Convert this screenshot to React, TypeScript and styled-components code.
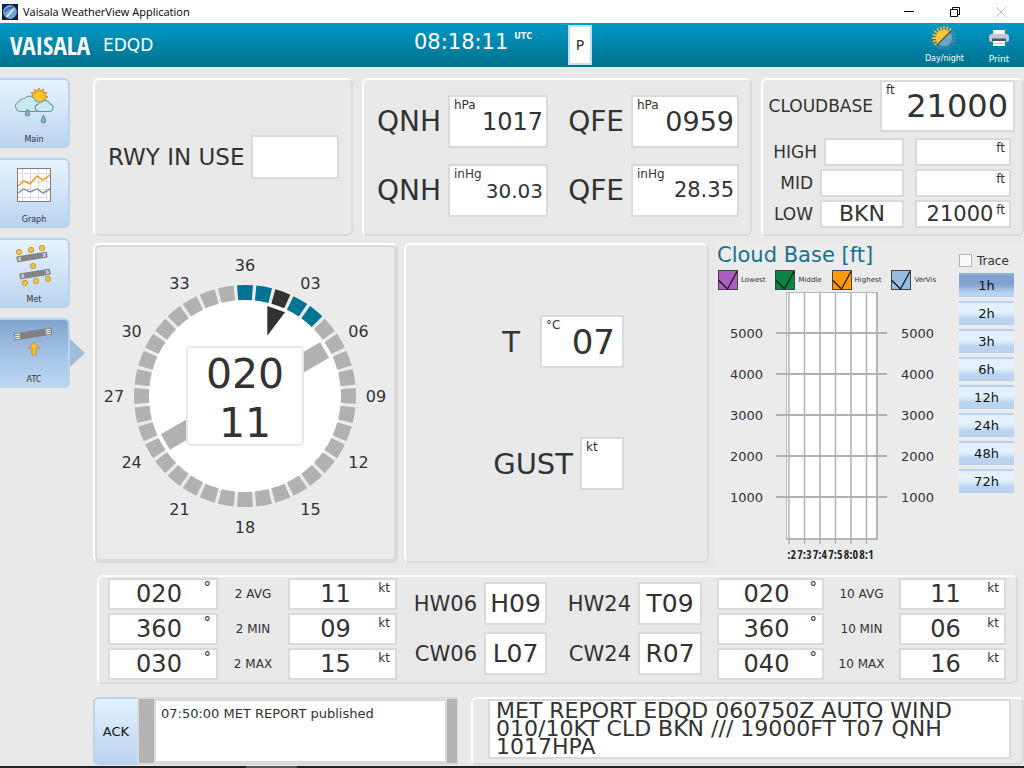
import React, { useState } from "react";
import styled, { createGlobalStyle, css } from "styled-components";

const Global = createGlobalStyle`
  *, *::before, *::after { box-sizing: border-box; }
  body {
    margin: 0;
    color: #323232;
    font-family: Verdana, "DejaVu Sans", sans-serif;
    background: #e9e9e9;
  }
  button, input { font: inherit; color: inherit; margin: 0; padding: 0; }
`;

const Page = styled.div`
  min-height: 100vh;
  display: flex;
  flex-direction: column;
  background: repeating-linear-gradient(#e9e9e9 0 3px, #e8e8e8 3px 5px, #e9e9e9 5px 8px);
`;

/* ---------- window title bar ---------- */

const TitleBar = styled.div`
  height: 23px;
  padding-left: 2px;
  display: flex;
  align-items: center;
  gap: 5px;
  background: #fff;
  color: #000;
`;
const TitleText = styled.span`
  flex: 1;
  font-family: "Open Sans", sans-serif;
  font-size: 11px;
`;
const WindowButtons = styled.div`
  display: flex;
`;
const WindowButton = styled.button<{ $off?: boolean }>`
  width: 46px;
  height: 22px;
  border: 0;
  background: none;
  color: ${(p) => (p.$off ? "#c4c4c4" : "#000")};
  display: flex;
  align-items: center;
  justify-content: center;
`;

/* ---------- application header ---------- */

const Header = styled.header`
  height: 44px;
  display: grid;
  grid-template-columns: 414fr 154fr 456fr;
  background: linear-gradient(#0099c6, #00708c);
  color: #fff;
`;
const Brand = styled.div`
  display: flex;
  align-items: center;
  gap: 14px;
  padding-left: 10px;
`;
const Logo = styled.span`
  width: 79px;
  font: bold 25px/44px "Liberation Sans Narrow", "Open Sans Condensed", "DejaVu Sans Condensed", sans-serif;
`;
const Station = styled.span`
  font-size: 17px;
`;
const Clock = styled.time`
  display: flex;
  align-items: flex-start;
  gap: 6px;
  padding-top: 6px;
  font-size: 21px;
  line-height: 26px;
`;
const Zone = styled.span`
  font-size: 8px;
  font-weight: bold;
  line-height: 16px;
`;
const HeaderRight = styled.div`
  display: flex;
  align-items: center;
  justify-content: space-between;
  padding-right: 8px;
`;
const PageFlag = styled.button`
  width: 24px;
  height: 40px;
  border: 2px solid #c3dfe9;
  background: #fff;
  color: #323232;
  font-size: 14px;
`;
const HeaderTools = styled.div`
  display: flex;
  gap: 18px;
`;
const ToolButton = styled.button<{ $size: number }>`
  min-width: 34px;
  height: 44px;
  border: 0;
  background: none;
  color: #fff;
  display: flex;
  flex-direction: column;
  align-items: center;
  justify-content: space-between;
  padding: 2px 0;
  font-size: ${(p) => p.$size}px;
  line-height: 12px;
`;

/* ---------- body ---------- */

const Body = styled.div`
  flex: 1;
  display: flex;
  padding-top: 11px;
`;
const SideNav = styled.nav`
  flex: 0 0 93px;
  display: flex;
  flex-direction: column;
  gap: 10px;
`;
const NavButton = styled.button<{ $active?: boolean }>`
  position: relative;
  width: 70px;
  height: 70px;
  border: 2px solid #b9d4ef;
  border-left: 0;
  border-radius: 0 6px 6px 0;
  background: ${(p) =>
    p.$active
      ? "linear-gradient(#7fa5cf, #a9c6e8 60%, #bdd6f2)"
      : "linear-gradient(#e6f3ff, #bbd4ef)"};
  display: flex;
  flex-direction: column;
  align-items: center;
  justify-content: space-between;
  padding: 3px 0 0;
  font-size: 8px;
  line-height: 12px;
  ${(p) =>
    p.$active &&
    css`
      &::after {
        content: "";
        position: absolute;
        left: 70px;
        top: 19px;
        border-left: 15px solid #9fbcd8;
        border-top: 14px solid transparent;
        border-bottom: 14px solid transparent;
      }
    `}
`;
const Main = styled.main`
  flex: 1;
  min-width: 0;
`;

const Panel = styled.section`
  min-width: 0;
  border: 2px solid;
  border-color: #fff #dadada #dadada #fff;
  border-radius: 6px;
`;
const TopRow = styled.div`
  display: grid;
  grid-template-columns: 260fr 390fr 263fr;
  gap: 9px;
  min-height: 158px;
`;
const MiddleRow = styled.div`
  display: grid;
  grid-template-columns: 305fr 305fr 309fr;
  gap: 6px;
  margin-top: 7px;
  min-height: 320px;
`;

/* ---------- value fields ---------- */

const FieldBox = styled.output<{ $w?: number; $h: number; $size: number; $align?: string; $pad?: number }>`
  position: relative;
  display: flex;
  align-items: center;
  justify-content: ${(p) => p.$align || "center"};
  width: ${(p) => (p.$w ? `${p.$w}px` : "100%")};
  height: ${(p) => p.$h}px;
  padding-right: ${(p) => p.$pad || 0}px;
  border: 2px solid #dadada;
  background: #fff;
  font-size: ${(p) => p.$size}px;
  line-height: 1;
`;
const Unit = styled.span<{ $right?: number; $size: number }>`
  position: absolute;
  top: 0;
  ${(p) => (p.$right ? `right: ${p.$right}px;` : "left: 4px;")}
  font-size: ${(p) => p.$size}px;
  line-height: 16px;
`;

type FieldProps = {
  label?: string;
  value?: string;
  unit?: string;
  w?: number;
  h: number;
  size?: number;
  align?: string;
  pad?: number;
  unitRight?: number;
  unitSize?: number;
};
const Field = ({ label, value, unit, w, h, size = 24, align, pad, unitRight, unitSize = 12 }: FieldProps) => (
  <FieldBox aria-label={label} $w={w} $h={h} $size={size} $align={align} $pad={pad}>
    {unit && <Unit $right={unitRight} $size={unitSize}>{unit}</Unit>}
    {value}
  </FieldBox>
);

const Label = styled.span<{ $size: number; $gap?: number; $w?: number }>`
  padding-right: ${(p) => p.$gap ?? 7}px;
  font-size: ${(p) => p.$size}px;
  text-align: right;
  white-space: nowrap;
  ${(p) => p.$w && `flex: 0 0 ${p.$w}px;`}
`;

const RunwayPanel = styled(Panel)`
  display: flex;
  align-items: center;
  padding-left: 13px;
`;
const PressurePanel = styled(Panel)`
  display: grid;
  grid-template-columns: 84fr 100fr 83fr 108fr;
  grid-auto-rows: 53px;
  gap: 16px 0;
  align-items: center;
  padding: 15px 11px 0 0;
`;
const CloudPanel = styled(Panel)`
  padding-right: 7px;
`;
const CloudTop = styled.div`
  display: grid;
  grid-template-columns: 117fr 135fr;
  align-items: center;
`;
const CloudLayer = styled.div`
  display: grid;
  grid-template-columns: 141fr 96fr;
  gap: 11px;
  padding-right: 4px;
  margin-top: 3px;
  &:nth-child(2) { margin-top: 6px; }
`;
const LayerAmount = styled.div`
  display: flex;
  align-items: center;
`;

/* ---------- wind rose ---------- */

const RoseFrame = styled.div`
  height: 100%;
  border: 2px solid #dadada;
  border-radius: 5px;
  background: #ebebeb;
`;
const RoseSvg = styled.svg`
  display: block;
  width: 100%;
  height: 312px;
`;

const polar = (deg: number, r: number) => {
  const a = (deg * Math.PI) / 180;
  return `${(Math.sin(a) * r).toFixed(2)} ${(-Math.cos(a) * r).toFixed(2)}`;
};
const segment = (i: number) => {
  const c = i * 10;
  const o = 4.1;
  return `M${polar(c - o, 111)}A111 111 0 0 1 ${polar(c + o, 111)}L${polar(c + o, 96)}A96 96 0 0 0 ${polar(c - o, 96)}Z`;
};
const segmentColor = (i: number) => (i === 2 ? "#323232" : i < 5 ? "#007493" : "#b1b1b1");

const WindRose = () => (
  <RoseSvg viewBox="-148 -149 297 312" role="img" aria-label="Wind 020 degrees, 11 knots">
    <circle r="97" fill="#fff" />
    {Array.from({ length: 36 }, (_, i) => (
      <path key={i} d={segment(i)} fill={segmentColor(i)} />
    ))}
    <rect x="-9" y="-92" width="18" height="184" fill="#b1b1b1" transform="rotate(60)" />
    <path d="M22.3-90 40-83.7 22.3-60.3Z" fill="#323232" />
    <rect x="-58" y="-49" width="116" height="98" rx="4" fill="#fff" stroke="#e6e6e6" strokeWidth="2" />
    <g fill="#323232" textAnchor="middle" fontSize="41">
      <text y="-8">020</text>
      <text y="41">11</text>
    </g>
    <g fill="#323232" textAnchor="middle" fontSize="16">
      {Array.from({ length: 12 }, (_, i) => {
        const [x, y] = polar(i * 30, 131).split(" ").map(Number);
        return (
          <text key={i} x={x} y={y + 6}>
            {String(i === 0 ? 36 : i * 3).padStart(2, "0")}
          </text>
        );
      })}
    </g>
  </RoseSvg>
);

/* ---------- temperature and gust ---------- */

const ReadingsPanel = styled(Panel)`
  display: flex;
  flex-direction: column;
  align-items: flex-end;
  gap: 69px;
  padding: 70px 83px 0 0;
`;
const Reading = styled.div`
  display: flex;
  align-items: center;
`;

/* ---------- cloud base chart ---------- */

const ChartPanel = styled.section`
  display: flex;
  gap: 9px;
  padding-right: 10px;
  background: #ebebeb;
`;
const ChartColumn = styled.div`
  flex: 1;
  min-width: 0;
  padding-left: 2px;
`;
const ChartTitle = styled.h2`
  margin: 0;
  color: #16718f;
  font-size: 21px;
  font-weight: normal;
  line-height: 25px;
  white-space: nowrap;
`;
const Legend = styled.div`
  display: flex;
  gap: 10px;
  padding: 2px 0 0 1px;
`;
const LegendItem = styled.label`
  display: grid;
  grid-template-columns: 20px auto;
  column-gap: 3px;
  align-items: center;
  font-size: 7px;
`;
const Swatch = styled.input<{ $color: string }>`
  appearance: none;
  grid-area: 1 / 1;
  width: 20px;
  height: 20px;
  border: 1px solid #444;
  background: ${(p) => p.$color};
`;
const SwatchMark = styled.svg`
  grid-area: 1 / 1;
  pointer-events: none;
  z-index: 1;
  input:not(:checked) + & { visibility: hidden; }
`;
const ChartSvg = styled.svg`
  display: block;
  width: 100%;
  height: 273px;
`;
const SideColumn = styled.div`
  flex: 0 0 55px;
  display: flex;
  flex-direction: column;
  gap: 4px;
`;
const TraceLabel = styled.label`
  display: flex;
  align-items: center;
  gap: 5px;
  height: 17px;
  margin: 9px 0 0;
  font-size: 12px;
  line-height: 16px;
`;
const TraceBox = styled.input`
  appearance: none;
  flex: 0 0 13px;
  height: 13px;
  border: 1px solid #b4b4b4;
  background: #fafafa;
  &:checked { background: #7fa5cf; }
`;
const HourButton = styled.button<{ $active: boolean }>`
  height: 24px;
  border: 0;
  border-top: 2px solid ${(p) => (p.$active ? "#8fb2d8" : "#b7d1ec")};
  border-bottom: 1px solid #b7d1ec;
  background: ${(p) =>
    p.$active
      ? "linear-gradient(#7fa3cd 45%, #bad3ef 85%)"
      : "linear-gradient(#e3f1fe 45%, #bad4f0 75%)"};
  color: #111;
  font-size: 13px;
  line-height: 20px;
`;

const legend = [
  { name: "Lowest", color: "#ad5fc0" },
  { name: "Middle", color: "#088443" },
  { name: "Highest", color: "#ff9900" },
  { name: "VerVis", color: "#95bde2" },
];
const ticks = [":2", "7:3", "7:4", "7:5", "8:0", "8:1"];
const hours = ["1h", "2h", "3h", "6h", "12h", "24h", "48h", "72h"];

const CloudChart = () => (
  <ChartSvg viewBox="0 0 232 273" preserveAspectRatio="xMinYMin meet" role="img" aria-label="Cloud base in feet">
    <rect x="69.5" y="2.5" width="91" height="246" fill="#fff" stroke="#b9b9b9" strokeWidth="1" />
    <path d="M160 2v247H69" fill="none" stroke="#b4b4b4" strokeWidth="2" />
    {[5000, 4000, 3000, 2000, 1000].map((ft, i) => {
      const y = 43 + i * 41;
      return (
        <g key={ft} fontSize="13" fill="#323232">
          <path d={`M59 ${y}H170`} stroke="#b1b1b1" strokeWidth="2" />
          <text x="46" y={y + 5} textAnchor="end">{ft}</text>
          <text x="184" y={y + 5}>{ft}</text>
        </g>
      );
    })}
    {ticks.map((t, i) => {
      const x = 72 + i * 15.5;
      return (
        <g key={t}>
          <path d={`M${x} 2V254`} stroke="#b1b1b1" strokeWidth="1.5" />
          <text
            x={x + 7}
            y="269"
            fontSize="12"
            fontFamily='"Liberation Sans Narrow", "Open Sans Condensed", "Liberation Sans", sans-serif'
            fill="#222"
            textAnchor="end"
          >
            {t}
          </text>
        </g>
      );
    })}
  </ChartSvg>
);

/* ---------- wind statistics ---------- */

const StatsPanel = styled(Panel)`
  display: grid;
  grid-template-columns: 289fr 320fr 289fr;
  min-height: 109px;
  margin: 12px 6px 0 4px;
  padding: 1px 10px 0 9px;
`;
const StatsTable = styled.table<{ $columns: string }>`
  display: block;
  tbody { display: grid; gap: 3px; }
  tr {
    display: grid;
    grid-template-columns: ${(p) => p.$columns};
    align-items: center;
    height: 32px;
  }
  td, th { padding: 0; font-size: 12px; font-weight: normal; text-align: center; }
`;
const ComponentGrid = styled.div`
  display: grid;
  grid-template-columns: 87fr 63fr 91fr 64fr;
  grid-auto-rows: 43px;
  gap: 7px 0;
  align-items: center;
  padding: 4px 15px 0 0;
`;

const WindStats = ({ minutes, columns, rows }: { minutes: number; columns: string; rows: string[][] }) => (
  <StatsTable $columns={columns}>
    <tbody>
      {rows.map(([kind, dir, speed]) => (
        <tr key={kind}>
          <td><Field value={dir} unit="°" h={32} size={24} pad={8} unitRight={5} unitSize={15} /></td>
          <th scope="row">{minutes} {kind}</th>
          <td><Field value={speed} unit="kt" h={32} size={24} pad={14} unitRight={5} /></td>
        </tr>
      ))}
    </tbody>
  </StatsTable>
);

/* ---------- messages ---------- */

const BottomRow = styled.div`
  display: grid;
  grid-template-columns: 365fr 553fr;
  gap: 13px;
  margin-top: 13px;
  height: 68px;
`;
const LogFrame = styled.section`
  display: flex;
  gap: 2px;
  padding-right: 1px;
  background: #dadada;
  border-radius: 6px 0 0 6px;
`;
const AckButton = styled.button`
  width: 44px;
  border: 2px solid #b9d4ef;
  border-right: 0;
  border-radius: 6px 0 0 6px;
  background: linear-gradient(#e4f2ff, #bad3ef);
  color: #111;
  font-size: 13px;
`;
const Bar = styled.div<{ $w: number }>`
  flex: 0 0 ${(p) => p.$w}px;
  margin: 2px 0;
  background: #b3b3b3;
`;
const Log = styled.div`
  flex: 1;
  margin: 4px 0;
  padding: 4px 5px;
  background: #fff;
  font-size: 13px;
  line-height: 18px;
`;
const ReportPanel = styled(Panel)`
  padding: 0 11px 0 15px;
`;
const Report = styled.p`
  margin: 0;
  height: 60px;
  padding: 1px 6px;
  overflow: hidden;
  border: 2px solid #dadada;
  background: #fff;
  font-size: 22px;
  line-height: 18px;
`;
const Taskbar = styled.div`
  height: 2px;
  margin-top: 1px;
  background: linear-gradient(90deg, #222 24%, #555 24% 29%, #222 29%);
`;

/* ---------- icons ---------- */

const AppIcon = () => (
  <svg width="16" height="16" viewBox="0 0 16 16" aria-hidden="true">
    <rect width="16" height="16" fill="#0b2350" />
    <circle cx="8" cy="8" r="6.5" fill="#6fa3dc" stroke="#a9c8ea" strokeWidth=".6" />
    <path d="M2.500 8q4-5 9-4.500" stroke="#3566ad" strokeWidth="2" fill="none" />
    <path d="M4 12.500 10 5.500 13 3 11.500 6.500 5.500 13Z" fill="#f0e9c4" />
  </svg>
);

const cloud =
  "M5.500 16.500a5 5 0 0 1-.8-9.800 4.500 4.500 0 0 1 5-3 6.500 6.500 0 0 1 11.500 2.300 5.300 5.300 0 0 1-.2 10.500Z";

const sunBurst = Array.from({ length: 24 }, (_, i) => polar(i * 15, i % 2 ? 6.2 : 9)).join("L");

const MainIcon = () => (
  <svg width="40" height="43" viewBox="0 -5 40 43" aria-hidden="true">
    <path d={`M${sunBurst}Z`} fill="#f9b022" stroke="#b98524" strokeWidth=".8" transform="translate(25 9)" />
    <circle cx="25" cy="9" r="5.200" fill="#ffc62e" />
    <g fill="#c9e9f1" stroke="#6492a2">
      <path d={cloud} transform="translate(.500 7)" />
      <path d={cloud} transform="translate(20.500 11.500) scale(.72)" strokeWidth="1.400" />
    </g>
    <g fill="#86b4c4" stroke="#50798a" strokeWidth=".8">
      <path d="M13.500 21q4.500 7 0 7t0-7Z" />
      <path d="M29.500 27q4.500 8 0 8t0-8Z" />
    </g>
  </svg>
);

const GraphIcon = () => (
  <svg width="34" height="39" viewBox="0 -5 34 39" aria-hidden="true">
    <rect x=".5" y=".5" width="33" height="33" fill="#fff" stroke="#7d7d86" />
    <path d="M5.500 1v32M13.500 1v32M21.500 1v32M29.500 1v32M1 5.500h32M1 13.500h32M1 21.500h32M1 29.500h32" stroke="#e2dce0" />
    <path d="M1 18l6-5 6 3 7-8 6 4 7-5" fill="none" stroke="#f79a10" strokeWidth="1.500" />
    <path d="M1 25l6-4 6 3 7-3 6 4 7-4" fill="none" stroke="#7f94ab" strokeWidth="1.500" />
  </svg>
);

const Dot = ({ x, y }: { x: number; y: number }) => (
  <circle cx={x} cy={y} r="2.700" fill="#f5c63c" stroke="#b58e3d" strokeWidth=".8" />
);

const MetIcon = () => (
  <svg width="38" height="44" viewBox="0 0 38 44" aria-hidden="true">
    {[[4, 9], [16, 7], [27, 5], [18, 23], [10, 40], [21, 38], [33, 36]].map(([x, y]) => (
      <Dot key={`${x}-${y}`} x={x} y={y} />
    ))}
    {["translate(17 14) rotate(-9)", "translate(20 31) rotate(-9)"].map((t) => (
      <g key={t} transform={t}>
        <rect x="-15" y="-2.500" width="30" height="5" fill="#858585" stroke="#6d6d6d" strokeWidth=".7" />
        <path d="M-14-1h3M-14 1h3M11-1h3M11 1h3" stroke="#fff" />
      </g>
    ))}
  </svg>
);

const AtcIcon = () => (
  <svg width="42" height="34" viewBox="0 0 42 34" aria-hidden="true">
    <g transform="translate(20 11) rotate(-9)">
      <rect x="-19" y="-3.500" width="38" height="7" fill="#808080" />
      <path d="M-18-2h5M-18 0h5M-18 2h5M13-2h5M13 0h5M13 2h5" stroke="#fff" />
    </g>
    <path d="M21 19l5.500 6h-3.500v7h-4v-7h-3.500Z" fill="#f5c22e" stroke="#b08a34" strokeWidth=".8" />
  </svg>
);

const rays = (from: number, to: number) =>
  Array.from({ length: 20 }, (_, i) => i * 18)
    .filter((d) => (from < to ? d >= from && d < to : d >= from || d < to))
    .map((d) => `M${polar(d, 7)}L${polar(d, 12)}`)
    .join("");

const DayNightIcon = () => (
  <svg width="26" height="26" viewBox="-13 -13 26 26" aria-hidden="true">
    <path d={rays(225, 45)} stroke="#f0b23a" strokeWidth="1.800" />
    <path d={rays(45, 225)} stroke="#4a86a6" strokeWidth="1.800" />
    <path d="M-5.700 5.700A8 8 0 0 1 5.700-5.700Z" fill="#ffc633" />
    <path d="M-5.700 5.700A8 8 0 0 0 5.700-5.700Z" fill="#68a9c8" />
    <path d="M-7 7 7-7" stroke="#51583f" strokeWidth="1.200" />
  </svg>
);

const PrintIcon = () => (
  <svg width="20" height="22" viewBox="0 -4 20 22" aria-hidden="true">
    <path d="M4 1h12v5H4Z" fill="#f4f6f7" />
    <rect y="5" width="20" height="8" rx="2.500" fill="#c3c7d2" />
    <path d="M3 9.500h14v3H3Z" fill="#4f5563" />
    <path d="M4 12h12v5H4Z" fill="#fff" />
    <path d="M5 14.500h10" stroke="#b9c0c6" />
  </svg>
);

const navItems = [
  { name: "Main", icon: <MainIcon /> },
  { name: "Graph", icon: <GraphIcon /> },
  { name: "Met", icon: <MetIcon /> },
  { name: "ATC", icon: <AtcIcon /> },
];

const layers = [
  { name: "HIGH", w: 61, amount: "", height: "" },
  { name: "MID", w: 57, amount: "", height: "" },
  { name: "LOW", w: 57, amount: "BKN", height: "21000" },
];

const components = [
  { name: "HW06", value: "H09" },
  { name: "HW24", value: "T09" },
  { name: "CW06", value: "L07" },
  { name: "CW24", value: "R07" },
];

export default function App() {
  const [view, setView] = useState("ATC");
  const [span, setSpan] = useState("1h");

  return (
    <Page>
      <Global />
      <TitleBar>
        <AppIcon />
        <TitleText>Vaisala WeatherView Application</TitleText>
        <WindowButtons>
          <WindowButton aria-label="Minimize">
            <svg width="10" height="10" viewBox="0 0 10 10"><path d="M0 4.500h10" stroke="currentColor" /></svg>
          </WindowButton>
          <WindowButton aria-label="Restore">
            <svg width="10" height="10" viewBox="0 0 10 10" fill="none" stroke="currentColor">
              <path d="M.5 2.500h7v7h-7ZM2.500 2.500v-2h7v7h-2" />
            </svg>
          </WindowButton>
          <WindowButton aria-label="Close" $off>
            <svg width="10" height="10" viewBox="0 0 10 10"><path d="M0 0l10 10M10 0L0 10" stroke="currentColor" /></svg>
          </WindowButton>
        </WindowButtons>
      </TitleBar>

      <Header>
        <Brand>
          <Logo>VAISALA</Logo>
          <Station>EDQD</Station>
        </Brand>
        <Clock>
          08:18:11<Zone>UTC</Zone>
        </Clock>
        <HeaderRight>
          <PageFlag>P</PageFlag>
          <HeaderTools>
            <ToolButton $size={8}><DayNightIcon />Day/night</ToolButton>
            <ToolButton $size={9}><PrintIcon />Print</ToolButton>
          </HeaderTools>
        </HeaderRight>
      </Header>

      <Body>
        <SideNav>
          {navItems.map((n) => (
            <NavButton key={n.name} $active={n.name === view} onClick={() => setView(n.name)}>
              {n.icon}
              {n.name}
            </NavButton>
          ))}
        </SideNav>

        <Main>
          <TopRow>
            <RunwayPanel>
              <Label $size={23}>RWY IN USE</Label>
              <Field label="Runway in use" w={88} h={44} />
            </RunwayPanel>

            <PressurePanel>
              <Label $size={28}>QNH</Label>
              <Field value="1017" unit="hPa" h={53} size={24} align="flex-end" pad={3} />
              <Label $size={28}>QFE</Label>
              <Field value="0959" unit="hPa" h={53} size={27} align="flex-end" pad={3} />
              <Label $size={28}>QNH</Label>
              <Field value="30.03" unit="inHg" h={53} size={20} align="flex-end" pad={3} />
              <Label $size={28}>QFE</Label>
              <Field value="28.35" unit="inHg" h={53} size={21} align="flex-end" pad={3} />
            </PressurePanel>

            <CloudPanel>
              <CloudTop>
                <Label $size={17}>CLOUDBASE</Label>
                <Field value="21000" unit="ft" h={52} size={32} align="flex-end" pad={5} />
              </CloudTop>
              {layers.map((l) => (
                <CloudLayer key={l.name}>
                  <LayerAmount>
                    <Label $size={17} $w={l.w}>{l.name}</Label>
                    <Field value={l.amount} h={28} size={22} />
                  </LayerAmount>
                  <Field value={l.height} unit="ft" h={28} size={21} pad={6} unitRight={4} />
                </CloudLayer>
              ))}
            </CloudPanel>
          </TopRow>

          <MiddleRow>
            <Panel>
              <RoseFrame>
                <WindRose />
              </RoseFrame>
            </Panel>

            <ReadingsPanel>
              <Reading>
                <Label $size={29} $gap={20}>T</Label>
                <Field value="07" unit="°C" w={84} h={53} size={34} align="flex-end" pad={7} />
              </Reading>
              <Reading>
                <Label $size={29}>GUST</Label>
                <Field label="Gust" unit="kt" w={44} h={53} />
              </Reading>
            </ReadingsPanel>

            <ChartPanel>
              <ChartColumn>
                <ChartTitle>Cloud Base [ft]</ChartTitle>
                <Legend>
                  {legend.map((l) => (
                    <LegendItem key={l.name}>
                      <Swatch type="checkbox" defaultChecked $color={l.color} />
                      <SwatchMark width="20" height="20" viewBox="0 0 20 20">
                        <path d="M1 10.500 9.500 19 19 1.500" fill="none" stroke="#111" strokeWidth="1.200" />
                      </SwatchMark>
                      {l.name}
                    </LegendItem>
                  ))}
                </Legend>
                <CloudChart />
              </ChartColumn>
              <SideColumn>
                <TraceLabel>
                  <TraceBox type="checkbox" />
                  Trace
                </TraceLabel>
                {hours.map((h) => (
                  <HourButton key={h} $active={h === span} onClick={() => setSpan(h)}>
                    {h}
                  </HourButton>
                ))}
              </SideColumn>
            </ChartPanel>
          </MiddleRow>

          <StatsPanel>
            <WindStats
              minutes={2}
              columns="110fr 70fr 109fr"
              rows={[["AVG", "020", "11"], ["MIN", "360", "09"], ["MAX", "030", "15"]]}
            />
            <ComponentGrid>
              {components.map((c) => (
                <React.Fragment key={c.name}>
                  <Label $size={21}>{c.name}</Label>
                  <Field value={c.value} h={43} size={25} />
                </React.Fragment>
              ))}
            </ComponentGrid>
            <WindStats
              minutes={10}
              columns="107fr 75fr 107fr"
              rows={[["AVG", "020", "11"], ["MIN", "360", "06"], ["MAX", "040", "16"]]}
            />
          </StatsPanel>

          <BottomRow>
            <LogFrame>
              <AckButton>ACK</AckButton>
              <Bar $w={15} />
              <Log>07:50:00 MET REPORT published</Log>
              <Bar $w={10} />
            </LogFrame>
            <ReportPanel>
              <Report>MET REPORT EDQD 060750Z AUTO WIND 010/10KT CLD BKN /// 19000FT T07 QNH 1017HPA</Report>
            </ReportPanel>
          </BottomRow>
        </Main>
      </Body>
      <Taskbar />
    </Page>
  );
}
